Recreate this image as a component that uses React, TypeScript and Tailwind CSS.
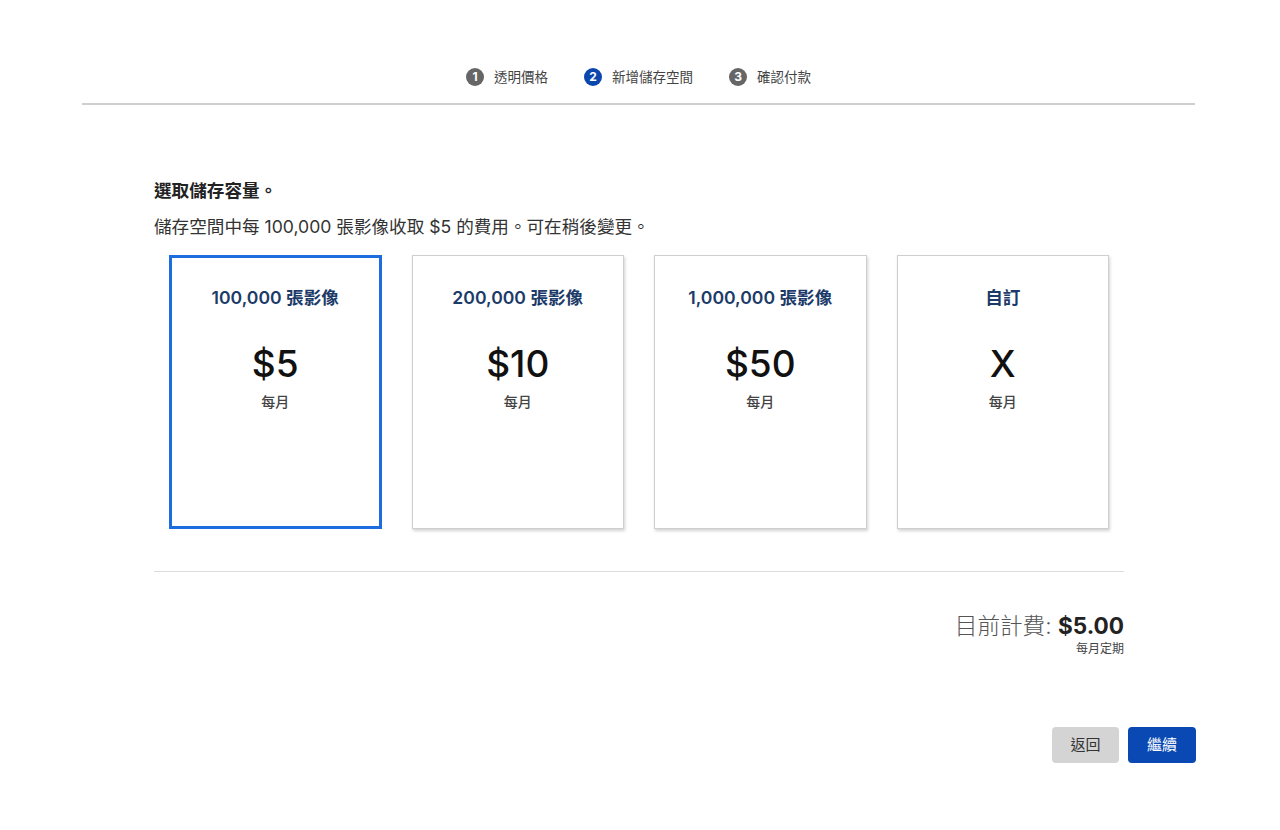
import React from "react";

const font = { fontFamily: 'Inter, "Noto Sans CJK TC", sans-serif' };

function Step({ n, label, active }: { n: number; label: string; active?: boolean }) {
  return (
    <div className="flex items-center gap-[10px]">
      <div
        className={
          "w-[18px] h-[18px] rounded-full flex items-center justify-center text-white text-[12px] font-bold " +
          (active ? "bg-[#0b47ad]" : "bg-[#666666]")
        }
      >
        {n}
      </div>
      <span className="text-[13.5px] text-[#444]">{label}</span>
    </div>
  );
}

const cards = [
  { title: "100,000 張影像", price: "$5", selected: true },
  { title: "200,000 張影像", price: "$10" },
  { title: "1,000,000 張影像", price: "$50" },
  { title: "自訂", price: "X" },
];

export default function App() {
  return (
    <div className="w-[1280px] h-[830px] bg-white" style={font}>
      <div className="ml-[82px] mr-[85px] pt-[65px]">
        <div className="flex justify-center items-center gap-[36px] h-[24px]">
          <Step n={1} label="透明價格" />
          <Step n={2} label="新增儲存空間" active />
          <Step n={3} label="確認付款" />
        </div>
        <div className="mt-[14px] h-[2px] bg-[#cfcfcf]" />
      </div>

      <div className="w-[970px] ml-[154px] mt-[74px]">
        <div className="text-[17.6px] font-bold leading-[24px] text-[#222]">選取儲存容量。</div>
        <div className="mt-[12px] text-[17.6px] leading-[24px] text-[#333]">
          儲存空間中每 100,000 張影像收取 $5 的費用。可在稍後變更。
        </div>

        <div className="mt-[16px] px-[15px] grid grid-cols-4 gap-[30px]">
          {cards.map((c) => (
            <div
              key={c.title}
              className={
                "h-[274px] bg-white flex flex-col items-center " +
                (c.selected
                  ? "border-[3px] border-[#1d6ce0] pt-[29px]"
                  : "border border-[#cfcfcf] shadow-[1px_2px_3px_rgba(0,0,0,0.18)] pt-[31px]")
              }
            >
              <div className="text-[17.6px] leading-[22px] font-semibold text-[#1c3b69]">{c.title}</div>
              <div className="mt-[35px] text-[37px] leading-[40px] font-medium text-[#111]">{c.price}</div>
              <div className="mt-[8px] text-[14px] leading-[20px] font-medium text-[#444]">每月</div>
            </div>
          ))}
        </div>

        <div className="mt-[42px] h-px bg-[#dcdcdc]" />

        <div className="mt-[40px] flex flex-col items-end">
          <div className="text-[22.6px] leading-[28px] text-[#555]">
            <span className="font-light">目前計費: </span>
            <span className="font-bold text-[#222]">$5.00</span>
          </div>
          <div className="mt-[1px] text-[12px] leading-[16px] text-[#444]">每月定期</div>
        </div>
      </div>

      <div className="mx-[84px] mt-[70px] flex justify-end gap-[9px]">
        <button className="w-[67px] h-[36px] rounded-[4px] bg-[#d4d4d4] text-[15px] text-[#333]">返回</button>
        <button className="w-[68px] h-[36px] rounded-[4px] bg-[#0a49b4] text-[15px] text-white">繼續</button>
      </div>
    </div>
  );
}
